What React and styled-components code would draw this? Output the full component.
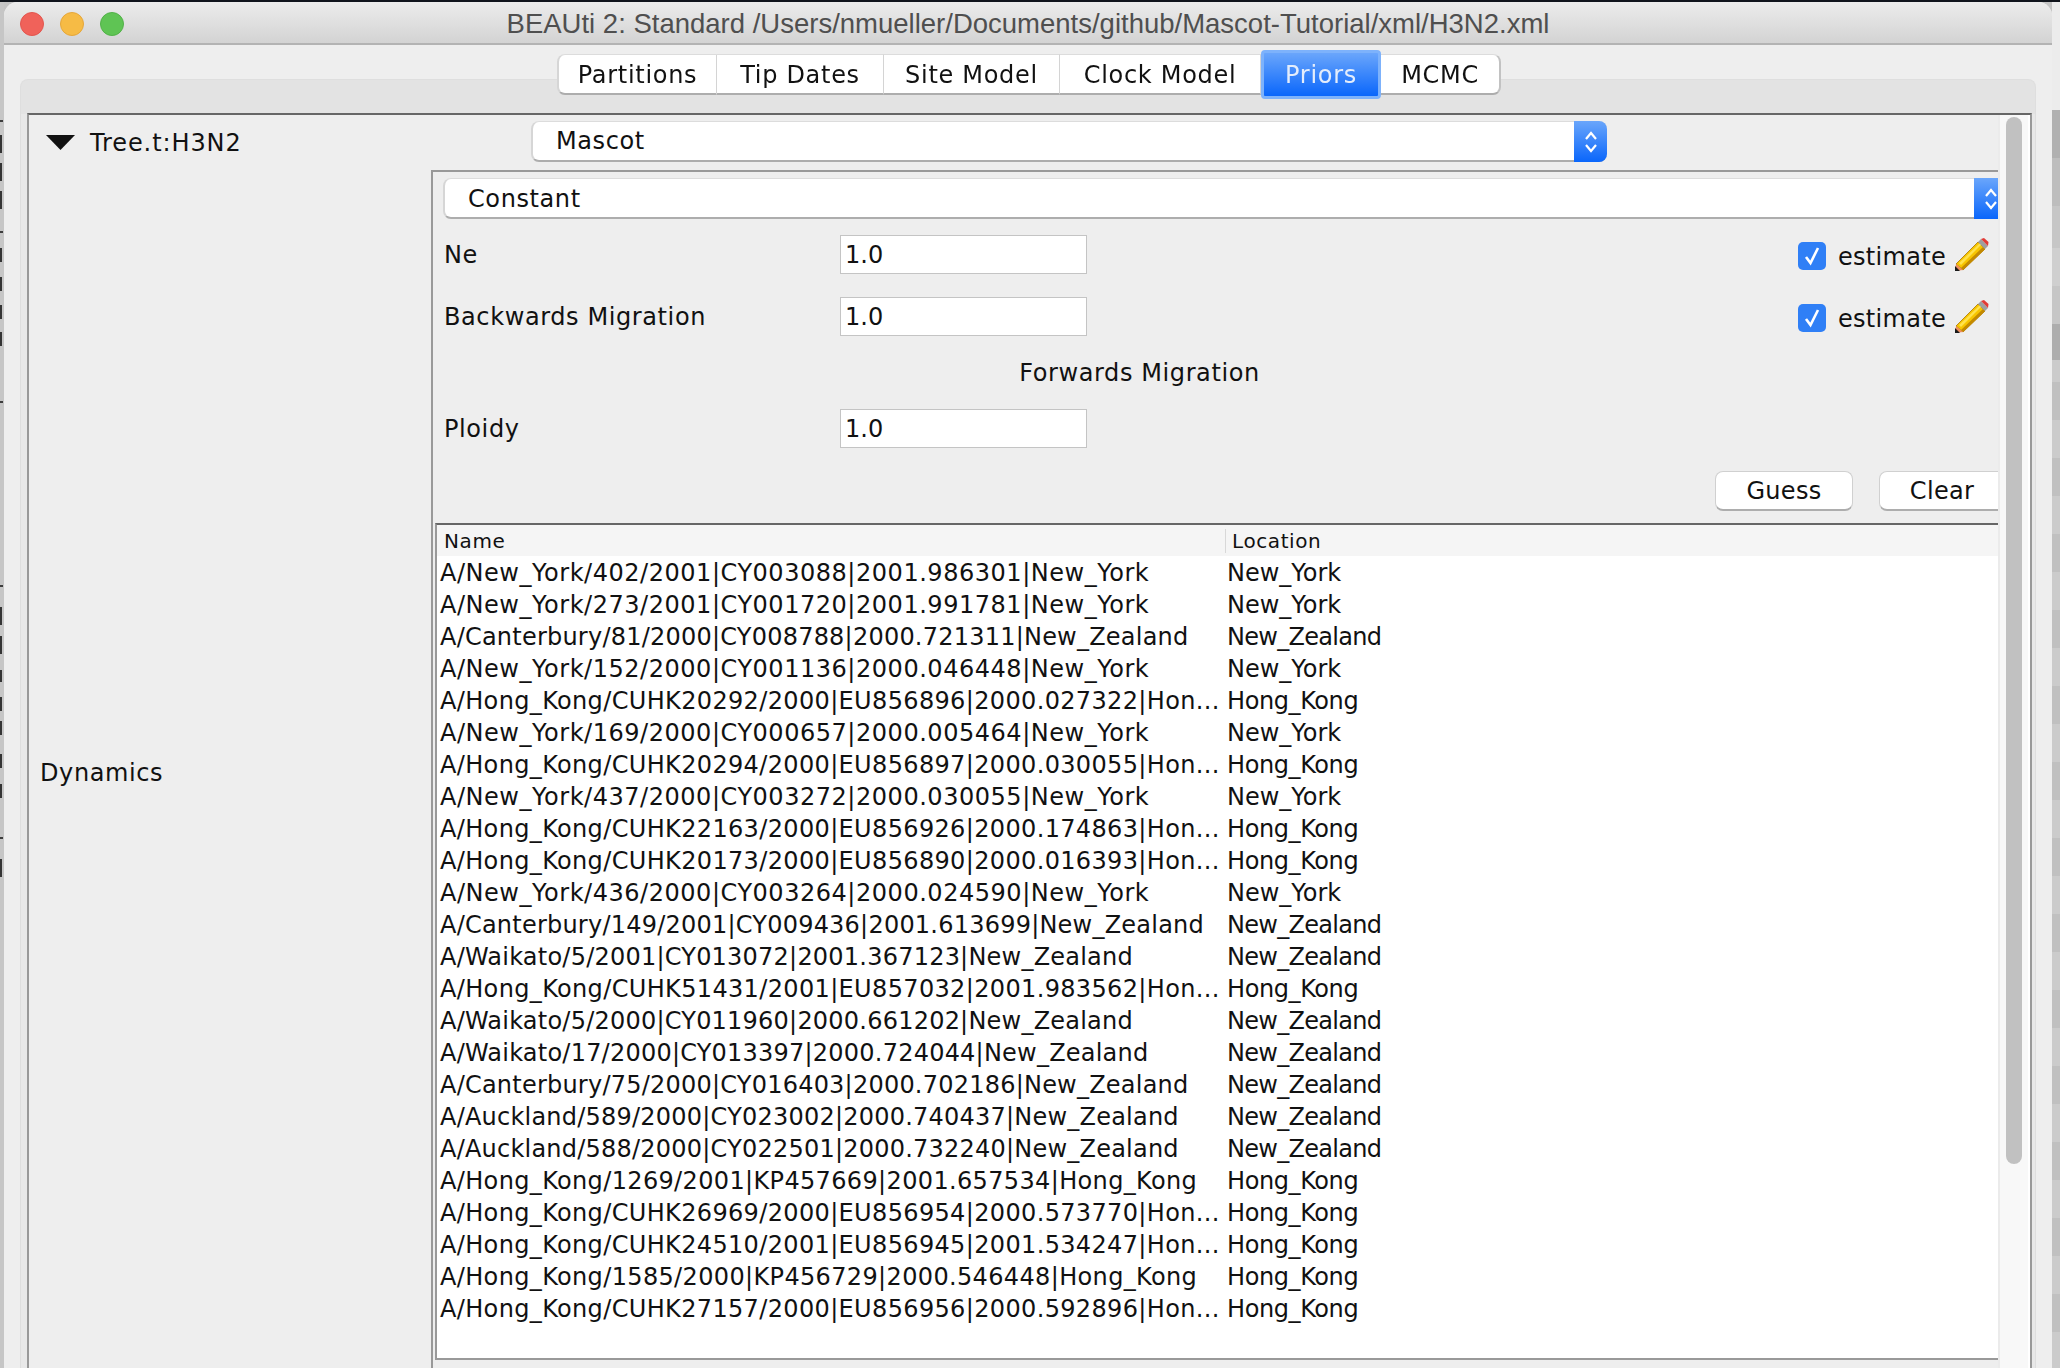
import React from "react";
import styled, { createGlobalStyle } from "styled-components";

const GlobalStyle = createGlobalStyle`
  html, body {
    margin: 0;
    padding: 0;
    background: #c4c4c4;
  }
  * {
    box-sizing: border-box;
  }
`;

const UI_FONT = `"DejaVu Sans", "Liberation Sans", sans-serif`;

const Desktop = styled.div`
  display: flex;
  width: 2060px;
  height: 1368px;
  overflow: hidden;
  border-top: 2px solid #10141c;
  background: #c4c4c4;
  font-family: ${UI_FONT};
  letter-spacing: 0.6px;
  color: #111;
`;

const LeftEdge = styled.svg`
  flex: none;
  width: 4px;
  height: 1366px;
`;

const RightEdge = styled.div`
  flex: none;
  width: 8px;
  height: 1366px;
  background: linear-gradient(
      to bottom,
      #ececec 0 108px,
      #b0b0b0 108px 156px,
      #bdbdbd 156px 204px,
      #c6c6c6 204px 246px,
      #cfcfcf 246px 284px,
      #c6c6c6 284px 322px,
      #adadad 322px 358px,
      transparent 358px
    ),
    repeating-linear-gradient(to bottom, #c0c0c0 0 38px, #cbcbcb 38px 76px);
`;

const Window = styled.div`
  flex: none;
  display: flex;
  flex-direction: column;
  width: 2048px;
  height: 1366px;
  overflow: hidden;
  border-radius: 14px 14px 0 0;
  background: #eeeeee;
  filter: blur(0.4px);
`;

const TitleBar = styled.div`
  flex: none;
  position: relative;
  display: flex;
  align-items: center;
  justify-content: center;
  height: 43px;
  padding-top: 3px;
  border-bottom: 2px solid #b3b3b3;
  background: linear-gradient(to bottom, #ececec, #d3d3d3);
`;

const Lights = styled.div`
  position: absolute;
  left: 16px;
  top: 10px;
  display: flex;
  gap: 16px;
`;

const Light = styled.span`
  width: 24px;
  height: 24px;
  border-radius: 50%;
  background: ${(props) => props.$color};
  border: 1px solid ${(props) => props.$edge};
`;

const Title = styled.div`
  font-family: "Liberation Sans", Arial, sans-serif;
  font-size: 27.5px;
  letter-spacing: 0;
  color: #4f4f4f;
  white-space: nowrap;
`;

const TabRow = styled.div`
  flex: none;
  position: relative;
  z-index: 2;
  display: flex;
  align-items: center;
  height: 49px;
  margin: 5px 0 0 553px;
`;

const Tab = styled.div`
  display: flex;
  align-items: center;
  justify-content: center;
  width: ${(props) => props.$width}px;
  height: ${(props) => (props.$active ? 49 : 41)}px;
  padding-top: 1px;
  background: ${(props) =>
    props.$active ? "linear-gradient(to bottom, #6aa6fb, #0a66fb)" : "#fff"};
  border: ${(props) => (props.$active ? "3px solid #7db2fb" : "none")};
  border-top: ${(props) => (props.$active ? "" : "1px solid #dcdcdc")};
  border-bottom: ${(props) => (props.$active ? "" : "2px solid #adadad")};
  border-right: ${(props) =>
    props.$active ? "" : props.$last ? "2px solid #c2c2c2" : "1px solid #d4d4d4"};
  border-left: ${(props) => (props.$first ? "2px solid #d6d6d6" : "")};
  border-radius: ${(props) =>
    props.$first ? "8px 0 0 8px" : props.$last ? "0 8px 8px 0" : props.$active ? "4px" : "0"};
  font-size: 24px;
  letter-spacing: 0.7px;
  color: ${(props) => (props.$active ? "#e4edfb" : "#111")};
`;

const TabPane = styled.div`
  flex: 1;
  min-height: 0;
  margin: -20px 16px 0 16px;
  padding: 33px 4px 0 6px;
  background: linear-gradient(to bottom, #e3e3e3 0 34px, #e8e8e8 34px);
  border: 1px solid #dedede;
  border-bottom: none;
  border-radius: 8px 8px 0 0;
`;

const ContentBox = styled.div`
  display: flex;
  width: 2005px;
  height: 1300px;
  overflow: hidden;
  border: 2px solid #999;
  border-top-color: #666;
  border-bottom: none;
  background: #eeeeee;
`;

const ScrollArea = styled.div`
  flex: none;
  display: flex;
  flex-direction: column;
  width: 1969px;
  padding-top: 6px;
`;

const ScrollTrack = styled.div`
  flex: none;
  width: 32px;
  padding: 2px 6px 0 6px;
  border-left: 2px solid #ebebeb;
  border-right: 2px solid #fff;
  background: #f8f8f8;
`;

const ScrollThumb = styled.div`
  width: 16px;
  height: 1047px;
  border-radius: 8px;
  background: #c1c1c1;
`;

const TreeRow = styled.div`
  flex: none;
  display: flex;
  align-items: center;
  height: 41px;
`;

const Disclosure = styled.svg`
  flex: none;
  width: 29px;
  height: 15px;
  margin: 2px 0 0 17px;
`;

const TreeLabel = styled.div`
  width: 441px;
  margin: 2px 0 0 15px;
  font-size: 24px;
  letter-spacing: 0.9px;
`;

const Combo = styled.div`
  flex: none;
  display: flex;
  align-items: stretch;
  width: ${(props) => props.$width}px;
  height: 41px;
  background: #fff;
  border-top: 1px solid #dcdcdc;
  border-bottom: 2px solid #adadad;
  border-left: 2px solid #d6d6d6;
  border-radius: 8px;
  font-size: 24px;
`;

const ComboText = styled.div`
  flex: 1;
  display: flex;
  align-items: center;
  padding: ${(props) => (props.$low ? 2 : 0)}px 0 0 23px;
`;

const ComboArrow = styled.div`
  flex: none;
  display: flex;
  align-items: center;
  justify-content: center;
  width: 33px;
  margin: -1px 0 -2px;
  border-radius: 0 8px 8px 0;
  background: linear-gradient(to bottom, #6aa6fb, #0a66fb);
`;

const DynamicsRow = styled.div`
  flex: none;
  display: flex;
  align-items: center;
  height: 1206px;
  margin-top: 8px;
`;

const DynamicsLabel = styled.div`
  flex: none;
  width: 402px;
  padding-left: 11px;
  font-size: 24px;
`;

const Panel = styled.div`
  flex: none;
  display: flex;
  flex-direction: column;
  width: 1567px;
  height: 1206px;
  overflow: hidden;
  padding-top: 6px;
  border-top: 2px solid #999;
  border-left: 2px solid #999;
`;

const PanelCombo = styled.div`
  flex: none;
  margin: 0 0 4px 10px;
`;

const ParamRow = styled.div`
  flex: none;
  display: flex;
  align-items: center;
  height: 62px;
  padding: 0 9px 0 11px;
  font-size: 24px;
`;

const ParamLabel = styled.div`
  flex: none;
  width: 396px;
  padding-top: 2px;
`;

const ParamInput = styled.input`
  flex: none;
  width: 247px;
  height: 39px;
  padding: 2px 4px 0;
  background: #fff;
  border: 1px solid #c4c4c4;
  outline: none;
  font-family: ${UI_FONT};
  font-size: 24px;
  color: #111;
`;

const Estimate = styled.div`
  display: flex;
  align-items: center;
  margin: 4px 0 0 auto;
`;

const CheckBox = styled.span`
  display: flex;
  align-items: center;
  justify-content: center;
  width: 28px;
  height: 28px;
  border-radius: 5px;
  background: #2f7ff6;
`;

const EstimateText = styled.span`
  margin: 0 9px 0 12px;
  padding-top: 2px;
  letter-spacing: 0.3px;
`;

const PencilIcon = styled.svg`
  flex: none;
  width: 34px;
  height: 33px;
  margin-top: -4px;
`;

const CenterHeading = styled.div`
  flex: none;
  display: flex;
  align-items: center;
  justify-content: center;
  height: 50px;
  padding: 2px 152px 0 0;
  font-size: 24px;
`;

const ButtonRow = styled.div`
  flex: none;
  display: flex;
  gap: 26px;
  margin: 12px 0 0 1282px;
`;

const Button = styled.div`
  flex: none;
  display: flex;
  align-items: center;
  justify-content: center;
  width: ${(props) => props.$width}px;
  height: 40px;
  background: #fff;
  border: 1px solid #d0d0d0;
  border-bottom: 2px solid #adadad;
  border-radius: 8px;
  font-size: 24px;
  letter-spacing: 0.3px;
`;

const Table = styled.div`
  flex: none;
  width: 1564px;
  height: 837px;
  margin: 12px 0 0 2px;
  overflow: hidden;
  background: #fff;
  border-top: 2px solid #666;
  border-left: 2px solid #999;
  border-bottom: 2px solid #999;
`;

const TableHeader = styled.div`
  display: flex;
  align-items: center;
  height: 31px;
  background: #f5f5f5;
  font-size: 20px;
`;

const HeaderCell = styled.div`
  flex: none;
  width: ${(props) => props.$width}px;
  padding-left: ${(props) => props.$pad}px;
  border-right: ${(props) => (props.$divider ? "1px solid #d8d8d8" : "none")};
`;

const TableBody = styled.div`
  padding-top: 1px;
`;

const TableRow = styled.div`
  display: flex;
  align-items: center;
  height: 32px;
  font-size: 24px;
  white-space: nowrap;
`;

const NameCell = styled.div`
  flex: none;
  width: 790px;
  padding-left: 3px;
  overflow: hidden;
  letter-spacing: ${(props) => props.$spacing}px;
`;

const LocationCell = styled.div`
  flex: none;
  letter-spacing: ${(props) => props.$spacing}px;
`;

const Updown = () => (
  <svg width="14" height="26" viewBox="0 0 14 26" fill="none" stroke="#fff" strokeWidth="2.2">
    <path d="M2 10 L7 4 L12 10" />
    <path d="M2 16 L7 22 L12 16" />
  </svg>
);

const Check = () => (
  <svg width="18" height="20" viewBox="0 0 18 20" fill="none" stroke="#fff" strokeWidth="2.6">
    <path d="M3 11 L7.5 17 L15 2" />
  </svg>
);

const Pencil = () => (
  <PencilIcon viewBox="0 0 34 33">
    <path d="M1 26 L23 4 L30 11 L8 32 Z" fill="#f7c500" stroke="#a87400" strokeWidth="0.8" />
    <path d="M4 25 L25 5 L26.5 6.5 L6 27 Z" fill="#ffe24d" />
    <path d="M8 32 L30 11 L28 9 L6 30 Z" fill="#c48a00" />
    <path d="M23 4 L26 1 L33 8 L30 11 Z" fill="#9f9f9f" />
    <path d="M26 1 L29 0 L33.5 4 L33 8 Z" fill="#e23b36" />
    <path d="M1 26 L8 32 L0 33 Z" fill="#ee8d5c" />
    <path d="M0 28 L5 33 L0 33 Z" fill="#1a1a1a" />
  </PencilIcon>
);

const EstimateBox = () => (
  <Estimate>
    <CheckBox>
      <Check />
    </CheckBox>
    <EstimateText>estimate</EstimateText>
    <Pencil />
  </Estimate>
);

const tabs = [
  { name: "Partitions", width: 160, first: true },
  { name: "Tip Dates", width: 167 },
  { name: "Site Model", width: 176 },
  { name: "Clock Model", width: 201 },
  { name: "Priors", width: 120, active: true },
  { name: "MCMC", width: 120, last: true },
];

const nameSpacing = { New_York: 0.53, New_Zealand: 0.22, Hong_Kong: 0.35 };
const locationSpacing = { New_York: 0, New_Zealand: -0.7, Hong_Kong: -0.4 };

const sequences = [
  ["A/New_York/402/2001|CY003088|2001.986301|New_York", "New_York"],
  ["A/New_York/273/2001|CY001720|2001.991781|New_York", "New_York"],
  ["A/Canterbury/81/2000|CY008788|2000.721311|New_Zealand", "New_Zealand"],
  ["A/New_York/152/2000|CY001136|2000.046448|New_York", "New_York"],
  ["A/Hong_Kong/CUHK20292/2000|EU856896|2000.027322|Hon...", "Hong_Kong"],
  ["A/New_York/169/2000|CY000657|2000.005464|New_York", "New_York"],
  ["A/Hong_Kong/CUHK20294/2000|EU856897|2000.030055|Hon...", "Hong_Kong"],
  ["A/New_York/437/2000|CY003272|2000.030055|New_York", "New_York"],
  ["A/Hong_Kong/CUHK22163/2000|EU856926|2000.174863|Hon...", "Hong_Kong"],
  ["A/Hong_Kong/CUHK20173/2000|EU856890|2000.016393|Hon...", "Hong_Kong"],
  ["A/New_York/436/2000|CY003264|2000.024590|New_York", "New_York"],
  ["A/Canterbury/149/2001|CY009436|2001.613699|New_Zealand", "New_Zealand"],
  ["A/Waikato/5/2001|CY013072|2001.367123|New_Zealand", "New_Zealand"],
  ["A/Hong_Kong/CUHK51431/2001|EU857032|2001.983562|Hon...", "Hong_Kong"],
  ["A/Waikato/5/2000|CY011960|2000.661202|New_Zealand", "New_Zealand"],
  ["A/Waikato/17/2000|CY013397|2000.724044|New_Zealand", "New_Zealand"],
  ["A/Canterbury/75/2000|CY016403|2000.702186|New_Zealand", "New_Zealand"],
  ["A/Auckland/589/2000|CY023002|2000.740437|New_Zealand", "New_Zealand"],
  ["A/Auckland/588/2000|CY022501|2000.732240|New_Zealand", "New_Zealand"],
  ["A/Hong_Kong/1269/2001|KP457669|2001.657534|Hong_Kong", "Hong_Kong"],
  ["A/Hong_Kong/CUHK26969/2000|EU856954|2000.573770|Hon...", "Hong_Kong"],
  ["A/Hong_Kong/CUHK24510/2001|EU856945|2001.534247|Hon...", "Hong_Kong"],
  ["A/Hong_Kong/1585/2000|KP456729|2000.546448|Hong_Kong", "Hong_Kong"],
  ["A/Hong_Kong/CUHK27157/2000|EU856956|2000.592896|Hon...", "Hong_Kong"],
];

const App = () => {
  return (
    <Desktop>
      <GlobalStyle />
      {/* bits of the window behind, sticking out on the left */}
      <LeftEdge viewBox="0 0 4 1366">
        <rect width="4" height="1366" fill="#c6c6c6" />
        <path
          d="M0 119h3 M1 133v18 M1 161v18 M1 189v18 M0 230h3 M1 246v14 M1 275v14 M1 303v14 M1 330v14 M0 400h3 M0 584h3 M1 605v18 M1 634v18 M1 668v12 M1 695v14 M1 719v14 M1 752v14 M1 782v14 M0 836h3 M1 857v18"
          stroke="#111"
          strokeWidth="1.6"
          fill="none"
        />
      </LeftEdge>
      <Window>
        <TitleBar>
          <Lights>
            <Light $color="#f0625a" $edge="#e2554e" />
            <Light $color="#f6bb45" $edge="#e5a63a" />
            <Light $color="#5fc454" $edge="#52b148" />
          </Lights>
          <Title>BEAUti 2: Standard /Users/nmueller/Documents/github/Mascot-Tutorial/xml/H3N2.xml</Title>
        </TitleBar>
        <TabRow>
          {tabs.map((tab) => (
            <Tab
              key={tab.name}
              $width={tab.width}
              $active={tab.active}
              $first={tab.first}
              $last={tab.last}
            >
              {tab.name}
            </Tab>
          ))}
        </TabRow>
        <TabPane>
          <ContentBox>
            <ScrollArea>
              <TreeRow>
                <Disclosure viewBox="0 0 29 15">
                  <path d="M0 0 H29 L14.5 15 Z" fill="#111" />
                </Disclosure>
                <TreeLabel>Tree.t:H3N2</TreeLabel>
                <Combo $width={1076}>
                  <ComboText>Mascot</ComboText>
                  <ComboArrow>
                    <Updown />
                  </ComboArrow>
                </Combo>
              </TreeRow>
              <DynamicsRow>
                <DynamicsLabel>Dynamics</DynamicsLabel>
                <Panel>
                  <PanelCombo>
                    <Combo $width={1564}>
                      <ComboText $low>Constant</ComboText>
                      <ComboArrow>
                        <Updown />
                      </ComboArrow>
                    </Combo>
                  </PanelCombo>
                  <ParamRow>
                    <ParamLabel>Ne</ParamLabel>
                    <ParamInput readOnly value="1.0" />
                    <EstimateBox />
                  </ParamRow>
                  <ParamRow>
                    <ParamLabel>Backwards Migration</ParamLabel>
                    <ParamInput readOnly value="1.0" />
                    <EstimateBox />
                  </ParamRow>
                  <CenterHeading>Forwards Migration</CenterHeading>
                  <ParamRow>
                    <ParamLabel>Ploidy</ParamLabel>
                    <ParamInput readOnly value="1.0" />
                  </ParamRow>
                  <ButtonRow>
                    <Button $width={138}>Guess</Button>
                    <Button $width={126}>Clear</Button>
                  </ButtonRow>
                  <Table>
                    <TableHeader>
                      <HeaderCell $width={789} $pad={7} $divider>
                        Name
                      </HeaderCell>
                      <HeaderCell $width={300} $pad={6}>
                        Location
                      </HeaderCell>
                    </TableHeader>
                    <TableBody>
                      {sequences.map(([name, location]) => (
                        <TableRow key={name}>
                          <NameCell $spacing={name.endsWith("...") ? 0.35 : nameSpacing[location]}>
                            {name}
                          </NameCell>
                          <LocationCell $spacing={locationSpacing[location]}>{location}</LocationCell>
                        </TableRow>
                      ))}
                    </TableBody>
                  </Table>
                </Panel>
              </DynamicsRow>
            </ScrollArea>
            <ScrollTrack>
              <ScrollThumb />
            </ScrollTrack>
          </ContentBox>
        </TabPane>
      </Window>
      <RightEdge />
    </Desktop>
  );
};

export default App;
